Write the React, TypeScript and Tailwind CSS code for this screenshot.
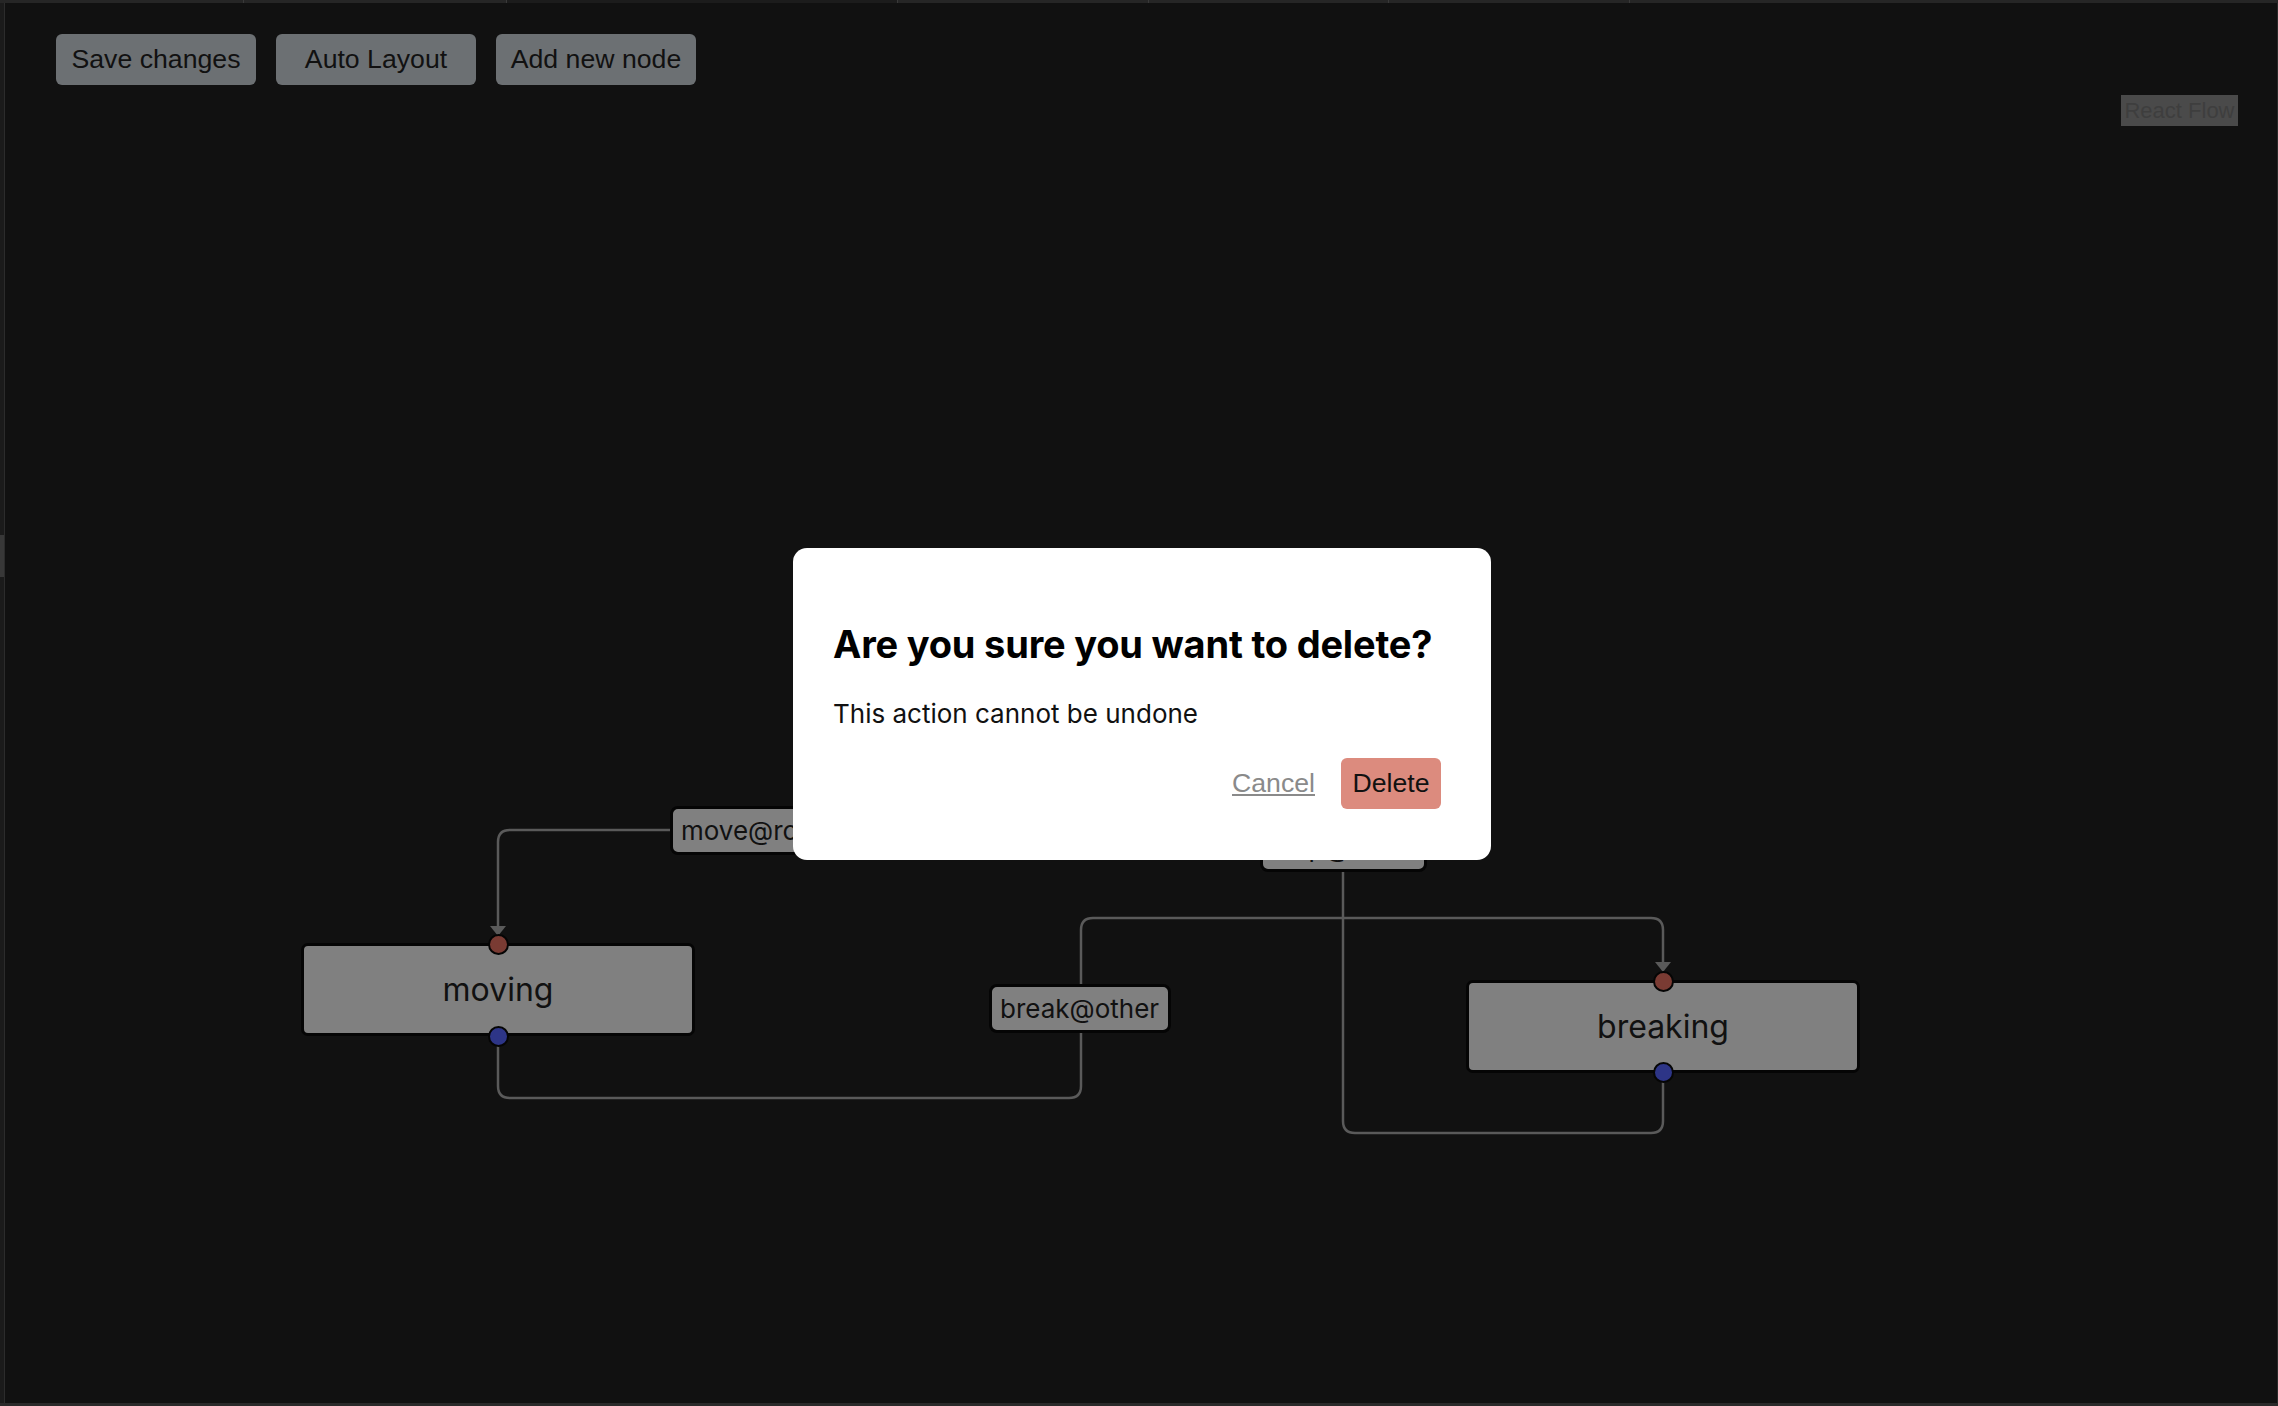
import React from "react";

const LABEL_FONT = { fontFamily: "Inter, 'Noto Sans', sans-serif" };

function Handle({ x, y, color }: { x: number; y: number; color: string }) {
  return (
    <div
      className="absolute w-[21px] h-[21px] rounded-full border-2 border-[#050505]"
      style={{ left: x - 10.5, top: y - 10.5, backgroundColor: color }}
    />
  );
}

function FlowNode({ x, y, label }: { x: number; y: number; label: string }) {
  return (
    <div
      className="absolute w-[394px] h-[93px] rounded-[7px] border-[3px] border-[#050505] bg-[#808080] flex items-center justify-center text-[32px] text-[#111] font-['Inter','Noto_Sans',sans-serif]"
      style={{ left: x, top: y }}
    >
      <span className="mt-[1px]">{label}</span>
    </div>
  );
}

function EdgeLabel({ x, y, w, label }: { x: number; y: number; w: number; label: string }) {
  return (
    <div
      className="absolute h-[49px] rounded-[8px] border-[3px] border-[#050505] bg-[#808080] flex items-center pl-[8px] text-[26px] text-[#111] whitespace-nowrap overflow-hidden font-['Inter','Noto_Sans',sans-serif]"
      style={{ left: x, top: y, width: w }}
    >
      {label}
    </div>
  );
}

export default function App() {
  const stroke = "#5a5a5a";
  return (
    <div className="relative w-[2278px] h-[1406px] bg-[#111111] overflow-hidden flex flex-col">
      {/* top strip */}
      <div className="h-[3px] flex bg-[#262626]">
        <div className="w-[244px] border-r border-[#3a3a3a]" />
        <div className="w-[263px] border-r border-[#3a3a3a]" />
        <div className="w-[391px] bg-[#1c1c1c] border-r border-[#3a3a3a]" />
        <div className="w-[251px] border-r border-[#3a3a3a]" />
        <div className="w-[240px] border-r border-[#3a3a3a]" />
        <div className="w-[241px] border-r border-[#3a3a3a]" />
        <div className="flex-1" />
      </div>
      <div className="flex-1 flex">
        {/* left strip */}
        <div className="w-[5px] bg-[#1b1b1b] border-r border-[#2c2c2c] flex flex-col">
          <div className="h-[532px]" />
          <div className="h-[42px] bg-[#383838]" />
        </div>
        {/* canvas */}
        <div className="flex-1 border-r border-[#2a2a2a]">
          <div className="flex gap-[20px] pl-[51px] pt-[31px]">
            {["Save changes", "Auto Layout", "Add new node"].map((t) => (
              <button
                key={t}
                className="w-[200px] h-[51px] rounded-[6px] bg-[#6c7073] text-[26.67px] text-[#111] font-['Liberation_Sans',Arial,sans-serif] flex items-center justify-center pb-[2px]"
              >
                {t}
              </button>
            ))}
          </div>
        </div>
      </div>
      <div className="h-[3px] bg-[#2a2a2a]" />

      {/* edges */}
      <svg className="absolute left-0 top-0 pointer-events-none" width={2278} height={1406}>
        <g fill="none" stroke={stroke} strokeWidth={2.5}>
          <path d="M 800 830 L 510 830 Q 498 830 498 842 L 498 927" />
          <path d="M 498 1046 L 498 1086 Q 498 1098 510 1098 L 1069 1098 Q 1081 1098 1081 1086 L 1081 930 Q 1081 918 1093 918 L 1651 918 Q 1663 918 1663 930 L 1663 963" />
          <path d="M 1343 800 L 1343 1121 Q 1343 1133 1355 1133 L 1651 1133 Q 1663 1133 1663 1121 L 1663 1080" />
        </g>
        <polygon points="490,926 506,926 498,936" fill={stroke} />
        <polygon points="1655,962 1671,962 1663,972" fill={stroke} />
      </svg>

      {/* edge labels */}
      <EdgeLabel x={670} y={806} w={190} label="move@robot" />
      <EdgeLabel x={989} y={984} w={182} label="break@other" />
      <EdgeLabel x={1260} y={823} w={167} label="stop@other" />

      {/* nodes */}
      <FlowNode x={301} y={943} label="moving" />
      <Handle x={498} y={944} color="#7a3b33" />
      <Handle x={498} y={1036} color="#2d3587" />

      <FlowNode x={1466} y={980} label="breaking" />
      <Handle x={1663} y={981} color="#7a3b33" />
      <Handle x={1663} y={1072} color="#2d3587" />

      {/* attribution */}
      <div className="absolute left-[2121px] top-[95px] w-[117px] h-[31px] bg-[#4a4a4a] flex items-center justify-center text-[22px] text-[#3e3e3e] font-['Liberation_Sans',Arial,sans-serif]">
        React Flow
      </div>

      {/* modal */}
      <div className="absolute inset-0 flex items-center justify-center">
        <div
          className="ml-[6px] mt-[1px] w-[698px] h-[312px] bg-white rounded-[14px] pl-[40px] pr-[50px] pt-[74px] flex flex-col"
          style={LABEL_FONT}
        >
          <h2 className="text-[38px] leading-[44px] font-bold text-black tracking-[-0.2px]">
            Are you sure you want to delete?
          </h2>
          <p className="mt-[30px] text-[26px] leading-[36px] text-[#111]">This action cannot be undone</p>
          <div className="mt-[26px] flex justify-end items-center gap-[26px]">
            <button className="text-[26.67px] text-[#8a8a8a] underline font-['Liberation_Sans',Arial,sans-serif]">
              Cancel
            </button>
            <button className="w-[100px] h-[51px] rounded-[6px] bg-[#dc8b7e] text-[26.67px] text-[#111] font-['Liberation_Sans',Arial,sans-serif] flex items-center justify-center">
              Delete
            </button>
          </div>
        </div>
      </div>
    </div>
  );
}
